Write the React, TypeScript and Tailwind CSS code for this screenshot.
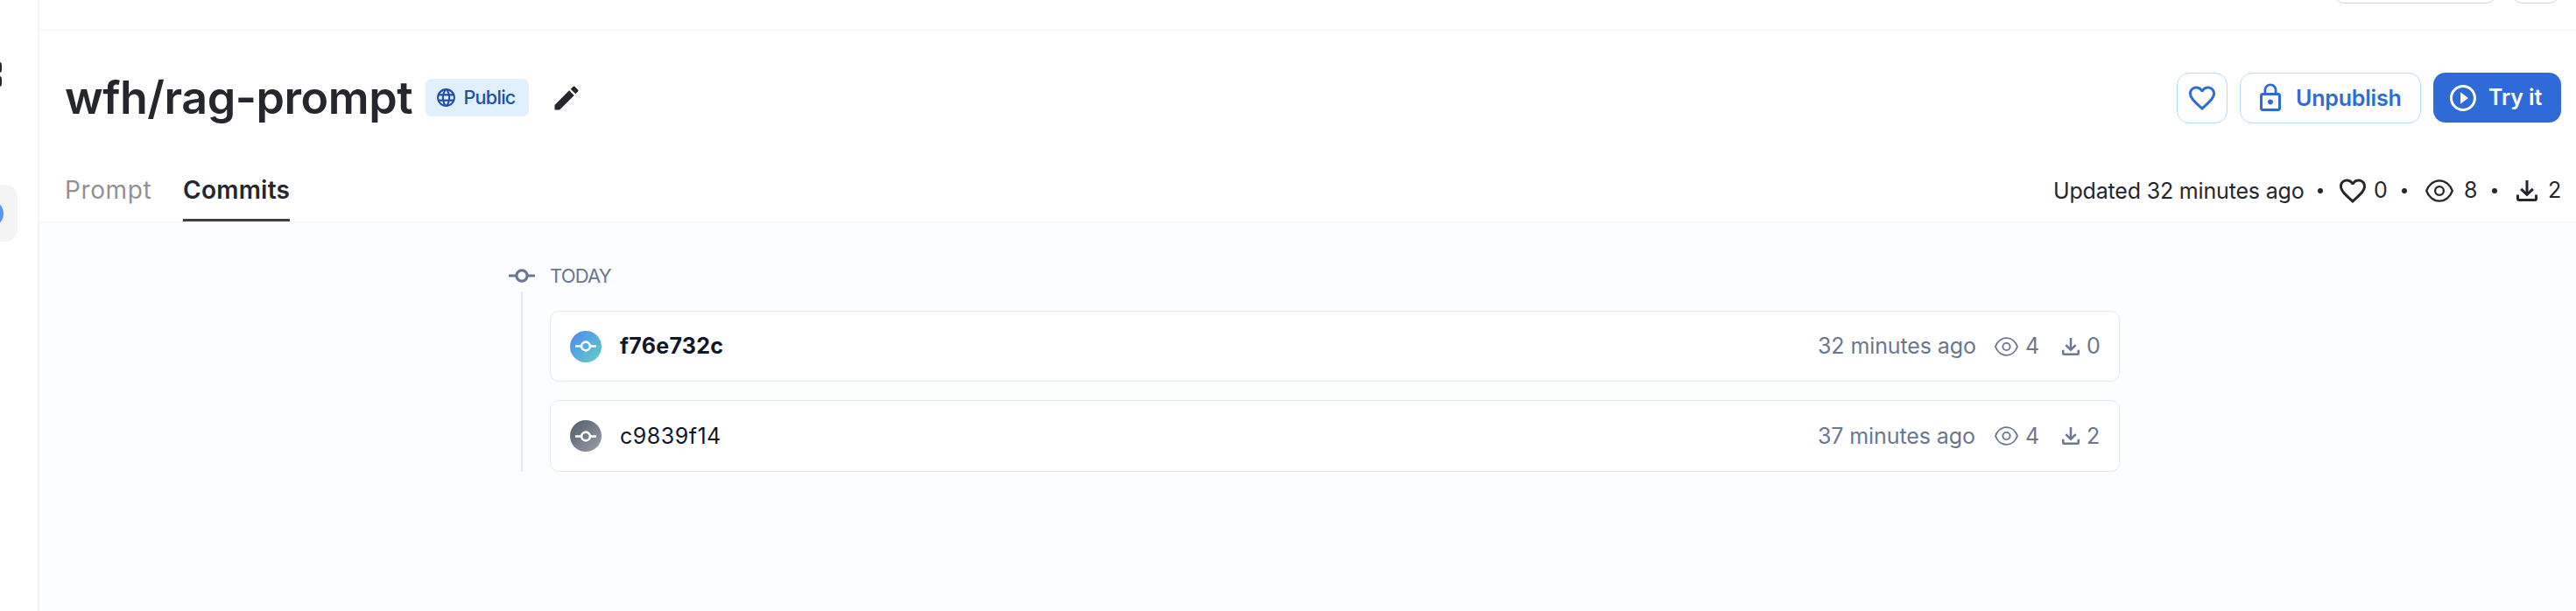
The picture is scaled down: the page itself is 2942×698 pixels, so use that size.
import React from "react";
import { MdEdit, MdFavoriteBorder, MdLanguage, MdLockOutline, MdPlayCircleOutline } from "react-icons/md";

type IconProps = { className?: string };

function EyeIcon({ className }: IconProps) {
  return (
    <svg viewBox="0 0 32 26" className={className} fill="none" stroke="currentColor" strokeWidth="2.3">
      <path d="M1.2 13C3.6 6.2 9.2 1.3 16 1.3S28.4 6.2 30.8 13C28.4 19.8 22.8 24.7 16 24.7S3.6 19.8 1.2 13Z" strokeLinejoin="round" />
      <circle cx="16" cy="13" r="4.9" />
    </svg>
  );
}

function DownloadIcon({ className }: IconProps) {
  return (
    <svg viewBox="0 0 24 24" className={className} fill="none" stroke="currentColor" strokeWidth="3">
      <path d="M12 0V16.6" />
      <path d="M5.2 9.8L12 16.4L18.8 9.8" />
      <path d="M1.5 16.4V21Q1.5 22.5 3 22.5H21Q22.5 22.5 22.5 21V16.4" />
    </svg>
  );
}

function CommitIcon({ className }: IconProps) {
  return (
    <svg viewBox="0 0 30 16" className={className} fill="none" stroke="currentColor" strokeWidth="3.2">
      <circle cx="15" cy="8" r="6.1" />
      <path d="M0 8H9M21 8H30" />
    </svg>
  );
}

function Sidebar() {
  return (
    <aside className="flex h-full w-[45px] shrink-0 flex-col overflow-hidden border-r-2 border-[#f2f4fa] pt-[71px]">
      <div className="flex flex-col gap-1">
        <div className="-ml-2 h-3 w-[10px] rounded-[3px] bg-[#26272d]" />
        <div className="-ml-2 h-3 w-[10px] rounded-[3px] bg-[#26272d]" />
      </div>
      <div className="mt-28 flex h-[65px] w-5 items-center rounded-r-[14px] bg-[#f4f4f4]">
        <div className="-ml-7 h-8 w-8 shrink-0 rounded-full bg-[#5b95f5]" />
      </div>
    </aside>
  );
}

function TopBar() {
  return (
    <div className="flex h-[35px] items-start justify-end gap-[14px] overflow-hidden border-b border-[#f2f4fc] pr-[17px]">
      <div className="-mt-10 h-11 w-[189px] rounded-[14px] border border-[#d6d6d9]" />
      <div className="-mt-10 h-11 w-[58px] rounded-[14px] border border-[#d6d6d9]" />
    </div>
  );
}

function Title() {
  return (
    <div className="flex h-[156px] items-start justify-between pr-[17px] pl-[29px]">
      <div className="flex items-start">
        <h1 className="mt-[45px] w-[412px] text-[52px] leading-[64px] font-semibold tracking-[-0.45px] whitespace-nowrap text-[#26272d]">wfh/rag-prompt</h1>
        <div className="mt-[55px] flex h-[43px] w-[118px] items-center rounded-[7px] bg-[#e0f0ff] pl-[10.5px] text-[#214ea8]">
          <MdLanguage className="h-[25px] w-[25px]" />
          <span className="-mt-px ml-[8px] text-[21.5px] leading-[28px] font-medium tracking-[-0.7px]">Public</span>
        </div>
        <MdEdit className="mt-[59px] ml-[25px] h-9 w-9 text-[#26272d]" />
      </div>
      <div className="mt-12 flex gap-[14px] text-[25px] leading-[32px] font-semibold">
        <button className="flex h-[58px] w-[58px] items-center justify-center rounded-[14px] border border-[#b2d9ff] text-[#2f6bd7]">
          <MdFavoriteBorder className="h-9 w-9" />
        </button>
        <button className="flex h-[58px] w-[207px] items-center rounded-[14px] border border-[#b2d9ff] pl-4 text-[#2f6bd7]">
          <MdLockOutline className="h-9 w-9" />
          <span className="-mt-px ml-[11px] tracking-[-0.2px]">Unpublish</span>
        </button>
        <button className="flex h-[57px] w-[146px] items-center rounded-[14px] bg-[#2f6bd7] pl-4 whitespace-nowrap text-white">
          <MdPlayCircleOutline className="h-9 w-9" />
          <span className="-mt-px ml-[11px] tracking-[-0.1px]">Try it</span>
        </button>
      </div>
    </div>
  );
}

function Dot() {
  return <div className="h-[6px] w-[6px] shrink-0 rounded-full bg-[#26272d]" />;
}

function Tabs() {
  return (
    <div className="flex h-[63px] justify-between border-b border-[#f2f4fa] pr-4 pl-7 text-[28px] leading-[34px] text-[#26272d]">
      <div className="flex gap-[37px]">
        <div className="flex w-[99px] pt-[9px] pl-px tracking-[0.6px] text-[#929293]">Prompt</div>
        <div className="flex w-[122px] border-b-[3px] border-[#404044] pt-[9px] font-semibold tracking-[0.25px]">Commits</div>
      </div>
      <div className="flex h-[54px] items-center text-[25px] leading-[32px] whitespace-nowrap">
        <span className="w-[302px] tracking-[-0.18px]">Updated 32 minutes ago</span>
        <Dot />
        <MdFavoriteBorder className="ml-4 h-9 w-9" />
        <span className="-mt-[3px] ml-[6px] w-[32px]">0</span>
        <Dot />
        <EyeIcon className="ml-[21px] h-[26px] w-8" />
        <span className="-mt-[3px] ml-[12px] w-[32px]">8</span>
        <Dot />
        <DownloadIcon className="ml-[22px] h-6 w-6" />
        <span className="-mt-[3px] ml-[12px] w-[16px]">2</span>
      </div>
    </div>
  );
}

type Commit = { hash: string; time: string; views: number; downloads: number; latest: boolean };

const commits: Commit[] = [
  { hash: "f76e732c", time: "32 minutes ago", views: 4, downloads: 0, latest: true },
  { hash: "c9839f14", time: "37 minutes ago", views: 4, downloads: 2, latest: false },
];

function CommitRow({ commit }: { commit: Commit }) {
  const tone = commit.latest ? "from-[#4f86ef] to-[#66cfc2]" : "from-[#545c69] to-[#9a9fac]";
  const weight = commit.latest ? "font-bold tracking-[0.3px]" : "font-normal tracking-[0.5px]";
  const height = commit.latest ? "h-[81px]" : "h-[82px]";
  return (
    <div className={`flex w-[1793px] items-center justify-between rounded-[10px] border border-[#e2e8f0] bg-white pr-[20px] pl-[22px] text-[25px] leading-[32px] ${height}`}>
      <div className="flex items-center">
        <div className={`flex h-9 w-9 items-center justify-center rounded-full bg-linear-to-br text-white ${tone}`}>
          <CommitIcon className="h-[13px] w-6" />
        </div>
        <span className={`-mt-px ml-[21px] text-[#10172a] ${weight}`}>{commit.hash}</span>
      </div>
      <div className="flex items-center text-[#6a778d]">
        <span className="-mt-px w-[202px] tracking-[-0.1px] whitespace-nowrap">{commit.time}</span>
        <EyeIcon className="h-[22px] w-[27px]" />
        <span className="-mt-px ml-[8px] w-[42px]">{commit.views}</span>
        <DownloadIcon className="h-5 w-5" />
        <span className="-mt-px ml-[8px] w-[17px]">{commit.downloads}</span>
      </div>
    </div>
  );
}

function History() {
  return (
    <div className="flex grow bg-[#fcfdff] pt-[52px] pl-[536px]">
      <div className="flex w-[30px] flex-col items-center text-[#6a778d]">
        <CommitIcon className="mt-[1px] h-4 w-[30px]" />
        <div className="mt-[10px] h-[206px] w-[2px] bg-[#e2e8f0]" />
      </div>
      <div className="ml-[17px] flex flex-col">
        <div className="-mt-[7px] h-[32px] text-[22px] leading-[32px] tracking-[-0.85px] text-[#6a778d]">TODAY</div>
        <div className="mt-6 flex flex-col gap-[21px]">
          {commits.map((commit) => (
            <CommitRow key={commit.hash} commit={commit} />
          ))}
        </div>
      </div>
    </div>
  );
}

export default function App() {
  return (
    <div className="flex h-[698px] w-[2942px] overflow-hidden bg-white font-['Inter',sans-serif]">
      <Sidebar />
      <main className="flex grow flex-col">
        <TopBar />
        <Title />
        <Tabs />
        <History />
      </main>
    </div>
  );
}
